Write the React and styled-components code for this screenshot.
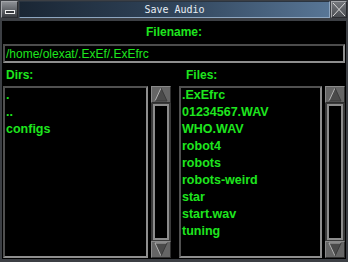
import React from 'react';
import styled, { createGlobalStyle } from 'styled-components';

const GlobalStyle = createGlobalStyle`
  html, body {
    margin: 0;
    padding: 0;
    background: #3c3f44;
  }
  body {
    width: 348px;
    height: 262px;
    overflow: hidden;
  }
`;

const dirs = ['.', '..', 'configs'];
const files = [
  '.ExEfrc',
  '01234567.WAV',
  'WHO.WAV',
  'robot4',
  'robots',
  'robots-weird',
  'star',
  'start.wav',
  'tuning',
];

function Arrow({ down }) {
  return (
    <svg width="16" height="15" viewBox="0 0 16 15">
      {down ? (
        <>
          <polygon points="2,1 14,1 8,14" fill="#4a4a4a" />
          <polyline points="2,1 14,1" stroke="#b0b0b0" strokeWidth="1" fill="none" />
          <polyline points="2,1 8,14" stroke="#b0b0b0" strokeWidth="1" fill="none" />
          <polyline points="14,1 8,14" stroke="#3a3a3a" strokeWidth="1" fill="none" />
        </>
      ) : (
        <>
          <polygon points="8,1 14,14 2,14" fill="#4a4a4a" />
          <polyline points="8,1 2,14" stroke="#b4b4b4" strokeWidth="1" fill="none" />
          <polyline points="8,1 14,14 2,14" stroke="#3a3a3a" strokeWidth="1" fill="none" />
        </>
      )}
    </svg>
  );
}

function FilePanel({ items }) {
  return (
    <Panel>
      <List>
        {items.map((name) => (
          <Item key={name}>{name}</Item>
        ))}
      </List>
      <ScrollBar>
        <ArrowButton><Arrow /></ArrowButton>
        <Trough />
        <ArrowButton><Arrow down /></ArrowButton>
      </ScrollBar>
    </Panel>
  );
}

export default function App() {
  return (
    <>
      <GlobalStyle />
      <Window>
        <TitleBar>
          <TitleButton>
            <MinBar />
          </TitleButton>
          <Title>Save Audio</Title>
          <TitleButton $close>
            <svg width="14" height="15" viewBox="0 0 14 15">
              <line x1="1" y1="1" x2="13" y2="14" stroke="#d8d8d8" strokeWidth="1" />
              <line x1="13" y1="1" x2="1" y2="14" stroke="#d8d8d8" strokeWidth="1" />
            </svg>
          </TitleButton>
        </TitleBar>
        <Body>
          <Label $center>Filename:</Label>
          <PathInput defaultValue="/home/olexat/.ExEf/.ExEfrc" />
          <Columns>
            <Column>
              <Label $indent={3}>Dirs:</Label>
              <FilePanel items={dirs} />
            </Column>
            <Column>
              <Label $indent={7}>Files:</Label>
              <FilePanel items={files} />
            </Column>
          </Columns>
        </Body>
      </Window>
    </>
  );
}

const Window = styled.div`
  width: 348px;
  height: 262px;
  box-sizing: border-box;
  background: #3c3f44;
  display: flex;
  flex-direction: column;
`;

const TitleBar = styled.div`
  height: 18px;
  display: flex;
  gap: 1px;
  padding: 1px 1px 0 1px;
  box-sizing: border-box;
`;

const TitleButton = styled.div`
  width: ${(p) => (p.$close ? '16px' : '17px')};
  height: 17px;
  box-sizing: border-box;
  border: 1px solid;
  border-color: #a4a6aa #2a2c30 #2a2c30 #a4a6aa;
  background: ${(p) =>
    p.$close
      ? 'linear-gradient(#74777c, #4a4d52)'
      : 'linear-gradient(#8c8f94, #3a3d42)'};
  display: flex;
  align-items: ${(p) => (p.$close ? 'center' : 'flex-end')};
  justify-content: center;
  padding-bottom: ${(p) => (p.$close ? '0' : '3px')};
`;

const MinBar = styled.div`
  width: 10px;
  height: 4px;
  box-sizing: border-box;
  border: 1px solid #f0f0f0;
  background: #3a3c40;
`;

const Title = styled.div`
  flex: 1;
  height: 17px;
  box-sizing: border-box;
  border: 1px solid;
  border-color: #2a3440 #8ea6c0 #8ea6c0 #2a3440;
  background: linear-gradient(to right, #1a2634, #30445a 50%, #587696);
  color: #e8eef4;
  font-family: 'DejaVu Sans Mono', monospace;
  font-size: 10px;
  line-height: 15px;
  text-align: center;
`;

const Body = styled.div`
  flex: 1;
  margin: 3px 2px 3px 2px;
  padding: 0 1px 1px 1px;
  background: #000;
  display: flex;
  flex-direction: column;
  min-height: 0;
`;

const Label = styled.div`
  color: #1ee61e;
  font-family: 'Liberation Sans', Arial, sans-serif;
  font-weight: bold;
  font-size: 12px;
  line-height: 14px;
  text-align: ${(p) => (p.$center ? 'center' : 'left')};
  padding-left: ${(p) => p.$indent || 0}px;
  margin: 4px 0 4px 0;
`;

const PathInput = styled.input`
  height: 19px;
  box-sizing: border-box;
  margin: 1px 0 0 0;
  border: 2px solid;
  border-color: #4c4c4c #8e8e8e #8e8e8e #4c4c4c;
  background: #000;
  color: #1ee61e;
  font-family: 'Liberation Sans', Arial, sans-serif;
  font-size: 12px;
  line-height: 15px;
  padding: 0 0 0 1px;
  outline: none;
`;

const Columns = styled.div`
  flex: 1;
  display: grid;
  grid-template-columns: 168px 166px;
  column-gap: 8px;
  min-height: 0;
  margin-top: 1px;
`;

const Column = styled.div`
  display: flex;
  flex-direction: column;
  min-height: 0;
`;

const Panel = styled.div`
  flex: 1;
  display: flex;
  gap: 3px;
  min-height: 0;
`;

const List = styled.div`
  flex: 1;
  box-sizing: border-box;
  border: 2px solid;
  border-color: #505050 #8e8e8e #8e8e8e #505050;
  background: #000;
  padding: 0 1px;
  overflow: hidden;
`;

const Item = styled.div`
  height: 17px;
  color: #1ee61e;
  font-family: 'Liberation Sans', Arial, sans-serif;
  font-weight: bold;
  font-size: 12.5px;
  line-height: 14px;
  white-space: nowrap;
`;

const ScrollBar = styled.div`
  width: 20px;
  display: flex;
  flex-direction: column;
  background: #3a3a3a;
`;

const ArrowButton = styled.div`
  height: 17px;
  box-sizing: border-box;
  border: 1px solid;
  border-color: #8a8a8a #2e2e2e #2e2e2e #8a8a8a;
  background: #656565;
  display: flex;
  align-items: center;
  justify-content: center;
`;

const Trough = styled.div`
  flex: 1;
  margin: 1px 2px;
  border: 2px solid #8c8c8c;
  background: #000;
`;
